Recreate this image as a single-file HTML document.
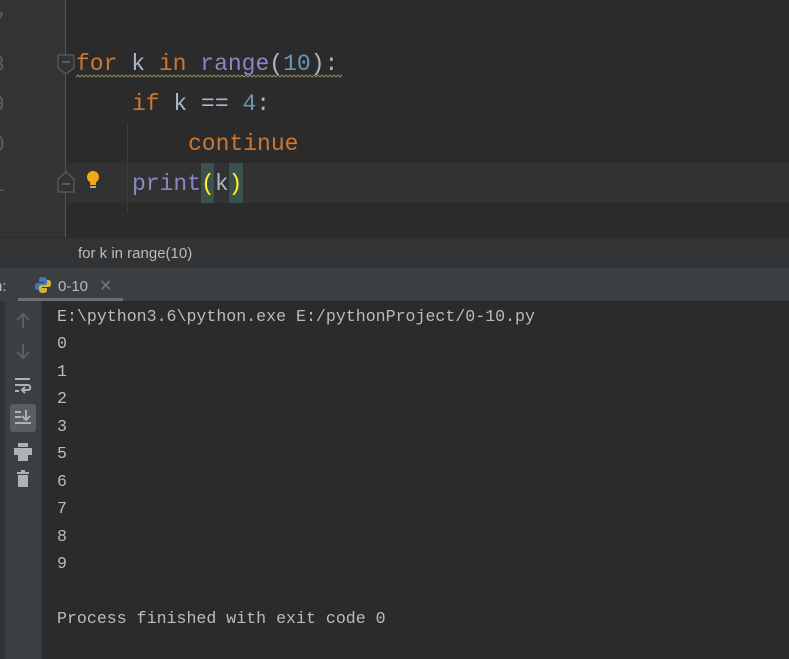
<!DOCTYPE html><html><head><style>
body{margin:0;width:789px;height:659px;overflow:hidden;background:#2b2b2b;position:relative;font-family:"Liberation Mono",monospace}
div{position:absolute}
.code{font-size:23px;line-height:40px;white-space:pre;color:#a9b7c6}
.kw{color:#cc7832}.fn{color:#8888c6}.num{color:#6897bb}
.con{font-size:16.6px;color:#bbbbbb;white-space:pre;left:57px}
.ln{font-size:23px;line-height:40px;color:#5a5d60;left:-9px}
</style></head><body>
<div style="left:0;top:0;width:65px;height:237px;background:#313335"></div>
<div style="left:65px;top:0;width:1px;height:237px;background:#555"></div>
<div style="left:66px;top:163px;width:723px;height:40px;background:#323232"></div>
<div class="ln" style="top:2px">7</div>
<div class="ln" style="top:45px">8</div>
<div class="ln" style="top:85px">9</div>
<div class="ln" style="top:125px">0</div>
<div class="ln" style="top:165px">1</div>
<svg style="position:absolute;left:57px;top:54px" width="18" height="22"><path d="M1 1H17V14L9 20L1 14Z" fill="#313335" stroke="#666"/><path d="M5 8H13" stroke="#888"/></svg>
<svg style="position:absolute;left:57px;top:171px" width="18" height="22"><path d="M1 21H17V8L9 1L1 8Z" fill="#313335" stroke="#666"/><path d="M5 13H13" stroke="#888"/></svg>
<svg style="position:absolute;left:85px;top:170px" width="16" height="20"><circle cx="8" cy="7" r="6" fill="#f2a818"/><rect x="5" y="12" width="6" height="3" fill="#f2a818"/><rect x="5" y="16" width="6" height="2" fill="#aaa"/></svg>
<svg style="position:absolute;left:76px;top:74px" width="266" height="5"><path d="M0 3 l2 -2 l2 2 l2 -2 l2 2 l2 -2 l2 2 l2 -2 l2 2 l2 -2 l2 2 l2 -2 l2 2 l2 -2 l2 2 l2 -2 l2 2 l2 -2 l2 2 l2 -2 l2 2 l2 -2 l2 2 l2 -2 l2 2 l2 -2 l2 2 l2 -2 l2 2 l2 -2 l2 2 l2 -2 l2 2 l2 -2 l2 2 l2 -2 l2 2 l2 -2 l2 2 l2 -2 l2 2 l2 -2 l2 2 l2 -2 l2 2 l2 -2 l2 2 l2 -2 l2 2 l2 -2 l2 2 l2 -2 l2 2 l2 -2 l2 2 l2 -2 l2 2 l2 -2 l2 2 l2 -2 l2 2 l2 -2 l2 2 l2 -2 l2 2 l2 -2 l2 2 l2 -2 l2 2 l2 -2 l2 2 l2 -2 l2 2 l2 -2 l2 2 l2 -2 l2 2 l2 -2 l2 2 l2 -2 l2 2 l2 -2 l2 2 l2 -2 l2 2 l2 -2 l2 2 l2 -2 l2 2 l2 -2 l2 2 l2 -2 l2 2 l2 -2 l2 2 l2 -2 l2 2 l2 -2 l2 2 l2 -2 l2 2 l2 -2 l2 2 l2 -2 l2 2 l2 -2 l2 2 l2 -2 l2 2 l2 -2 l2 2 l2 -2 l2 2 l2 -2 l2 2 l2 -2 l2 2 l2 -2 l2 2 l2 -2 l2 2 l2 -2 l2 2 l2 -2 l2 2 l2 -2 l2 2 l2 -2 l2 2 l2 -2 l2 2 l2 -2 l2 2 l2 -2 l2 2 l2 -2 l2 2 l2 -2 l2 2 l2 -2 l2 2 l2 -2 l2 2 l2 -2 l2 2 l2 -2 l2 2 l2 -2 l2 2 l2 -2 l2 2" fill="none" stroke="#8c8c5a" stroke-width="1"/></svg>
<svg style="position:absolute;left:229px;top:196px" width="14" height="5"><path d="M0 3 l2 -2 l2 2 l2 -2 l2 2 l2 -2 l2 2 l2 -2" fill="none" stroke="#8c8c5a"/></svg>
<div style="left:127px;top:123px;width:1px;height:90px;background:#3b3b3b"></div>
<div style="left:201px;top:163px;width:13px;height:40px;background:#3b514d"></div>
<div style="left:229px;top:163px;width:14px;height:40px;background:#3b514d"></div>
<div class="code" style="left:76px;top:44px"><span class="kw">for</span> k <span class="kw">in</span> <span class="fn">range</span>(<span class="num">10</span>):</div>
<div class="code" style="left:132px;top:84px"><span class="kw">if</span> k == <span class="num">4</span>:</div>
<div class="code" style="left:188px;top:124px"><span class="kw">continue</span></div>
<div class="code" style="left:132px;top:164px"><span class="fn">print</span><span style="color:#ffef28">(</span>k<span style="color:#ffef28">)</span></div>
<div style="left:0;top:237px;width:789px;height:31px;background:#313335;border-top:1px solid #2b2b2b;box-sizing:border-box"></div>
<div style="left:78px;top:245px;font-family:'Liberation Sans',sans-serif;font-size:15px;color:#bbb">for k in range(10)</div>
<div style="left:0;top:268px;width:789px;height:33px;background:#3c3f41"></div>
<div style="left:-6px;top:278px;font-family:'Liberation Sans',sans-serif;font-size:15px;color:#bbb">n:</div>
<svg style="position:absolute;left:34px;top:276px" width="18" height="18"><path d="M9 1C5 1 5 3 5 4V6H10V7H3C1 7 1 10 1 11C1 14 3 14 4 14H5V11C5 10 6 9 7 9H11C12 9 13 8 13 7V4C13 2 11 1 9 1Z" fill="#3d7ab3"/><path d="M9 17C13 17 13 15 13 14V12H8V11H15C17 11 17 8 17 7C17 4 15 4 14 4H13V7C13 8 12 9 11 9H7C6 9 5 10 5 11V14C5 16 7 17 9 17Z" fill="#d4b43a"/></svg>
<div style="left:58px;top:278px;font-family:'Liberation Sans',sans-serif;font-size:15px;color:#bbb">0-10</div>
<div style="left:99px;top:276px;font-family:'Liberation Sans',sans-serif;font-size:16px;color:#777">✕</div>
<div style="left:18px;top:298px;width:105px;height:3px;background:#6c6e70"></div>
<div style="left:0;top:301px;width:41px;height:358px;background:#3c3f41;border-right:1px solid #323232"></div>
<div style="left:0;top:301px;width:5px;height:358px;background:#313335"></div>
<svg style="position:absolute;left:10px;top:310px" width="26" height="185" fill="none" stroke="#5c5f61" stroke-width="2">
<path d="M13 4V18M7 10L13 4L19 10"/><path d="M13 34V48M7 42L13 48L19 42"/>
<g stroke="#afb1b3"><path d="M5 69H20M5 75H18C21 75 21 80 18 80H13M15 77L12 80L15 83M5 81H9"/></g>
<rect x="0" y="94" width="26" height="28" rx="3" fill="#5b5e60" stroke="none"/>
<g stroke="#afb1b3"><path d="M5 102H11M5 107H11M5 113H21M16 100V110M12 106L16 110L20 106"/></g>
<g fill="#afb1b3" stroke="none"><rect x="8" y="133" width="10" height="4"/><rect x="4" y="138" width="18" height="7"/><rect x="8" y="145" width="10" height="6"/><rect x="7" y="162" width="12" height="2"/><rect x="11" y="160" width="4" height="2"/><rect x="8" y="165" width="10" height="12"/></g>
</svg>
<div class="con" style="top:307px">E:\python3.6\python.exe E:/pythonProject/0-10.py</div>
<div class="con" style="top:334px">0</div>
<div class="con" style="top:362px">1</div>
<div class="con" style="top:389px">2</div>
<div class="con" style="top:417px">3</div>
<div class="con" style="top:444px">5</div>
<div class="con" style="top:472px">6</div>
<div class="con" style="top:499px">7</div>
<div class="con" style="top:527px">8</div>
<div class="con" style="top:554px">9</div>
<div class="con" style="top:609px">Process finished with exit code 0</div>
</body></html>
